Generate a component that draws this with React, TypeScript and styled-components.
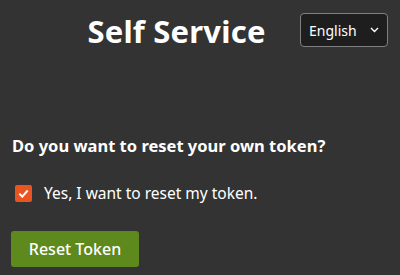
import React, { useState } from "react";
import styled, { createGlobalStyle } from "styled-components";

const GlobalStyle = createGlobalStyle`
    html, body {
        margin: 0;
        padding: 0;
        background: #333333;
        color: #ffffff;
        font-family: "Noto Sans", "Open Sans", sans-serif;
    }
`;

const Page = styled.div`
    display: flex;
    flex-direction: column;
    padding: 0 12px;
    height: 275px;
    overflow: hidden;
`;

const Header = styled.header`
    display: flex;
    align-items: flex-start;
    padding-top: 13px;
    padding-left: 41px;
`;

const Title = styled.h1`
    flex: 1;
    margin: 0;
    text-align: center;
    font-size: 31px;
    font-weight: 700;
    line-height: 36px;
    letter-spacing: 0.2px;
`;

const LangSelect = styled.div`
    width: 88px;
    height: 34px;
    box-sizing: border-box;
    border: 1px solid #808080;
    border-radius: 4px;
    background: #1e1e1e;
    display: flex;
    align-items: center;
    padding: 0 8px;
    font-size: 14px;
    justify-content: space-between;
`;

const Question = styled.h2`
    margin: 86px 0 0;
    font-size: 16.5px;
    font-weight: 700;
    line-height: 22px;
`;

const CheckRow = styled.label`
    display: flex;
    align-items: center;
    gap: 12px;
    margin-top: 25px;
    padding-left: 3px;
    font-size: 15.5px;
    cursor: pointer;
`;

const Box = styled.span<{ checked: boolean }>`
    width: 17px;
    height: 17px;
    border-radius: 2px;
    background: ${({ checked }) => (checked ? "#e95420" : "transparent")};
    border: ${({ checked }) => (checked ? "none" : "1px solid #aaa")};
    display: flex;
    align-items: center;
    justify-content: center;
`;

const Button = styled.button`
    align-self: flex-start;
    margin-top: 27px;
    margin-left: -1px;
    width: 128px;
    height: 36px;
    border: none;
    border-radius: 3px;
    background: #5e8a1d;
    color: #ffffff;
    font-family: inherit;
    font-size: 16px;
    font-weight: 500;
    cursor: pointer;
`;

export default function App() {
    const [checked, setChecked] = useState(true);
    return (
        <>
            <GlobalStyle />
            <Page>
                <Header>
                    <Title>Self Service</Title>
                    <LangSelect>
                        <span>English</span>
                        <svg width="9" height="6" viewBox="0 0 9 6">
                            <path d="M1 1l3.5 3.5L8 1" stroke="#fff" strokeWidth="1.4" fill="none" />
                        </svg>
                    </LangSelect>
                </Header>
                <Question>Do you want to reset your own token?</Question>
                <CheckRow onClick={() => setChecked(!checked)}>
                    <Box checked={checked}>
                        {checked && (
                            <svg width="11" height="9" viewBox="0 0 11 9">
                                <path d="M1.3 4.6l3 3L9.7 1.5" stroke="#fff" strokeWidth="2" fill="none" />
                            </svg>
                        )}
                    </Box>
                    <span>Yes, I want to reset my token.</span>
                </CheckRow>
                <Button>Reset Token</Button>
            </Page>
        </>
    );
}
